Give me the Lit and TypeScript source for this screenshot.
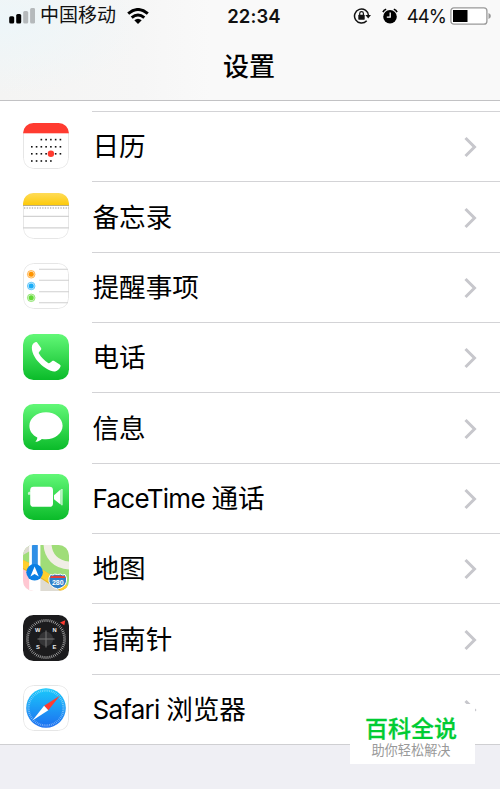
import { LitElement, html, css, svg } from "lit";
import { customElement, property } from "lit/decorators.js";

const range = (n: number) => Array.from({ length: n }, (_, i) => i);

const ticks = (cx: number, cy: number, inner: number, outer: number, count: number) =>
  range(count)
    .map((i) => {
      const a = (i / count) * Math.PI * 2;
      const p = (r: number) => `${(cx + Math.cos(a) * r).toFixed(2)} ${(cy + Math.sin(a) * r).toFixed(2)}`;
      return `M${p(inner)}L${p(outer)}`;
    })
    .join("");

const calendarDots = [
  { y: 16.6, from: 2, to: 7 },
  { y: 23.8, from: 0, to: 7 },
  { y: 30.8, from: 0, to: 7 },
  { y: 38, from: 0, to: 5 },
].map((row) => ({ y: row.y, xs: range(row.to - row.from).map((i) => 8.8 + (row.from + i) * 4.77) }));

const whiteBase = svg`
  <rect width="46" height="46" fill="#fff"/>`;

const outline = svg`
  <rect x="0.5" y="0.5" width="45" height="45" rx="10" fill="none" stroke="#e6e6e6"/>`;

const green = svg`
  <defs>
    <linearGradient id="g" x1="0" y1="0" x2="0" y2="1">
      <stop offset="0" stop-color="#62f877"/>
      <stop offset="1" stop-color="#0abb29"/>
    </linearGradient>
  </defs>
  <rect width="46" height="46" fill="url(#g)"/>`;

const icons: Record<string, unknown> = {
  calendar: svg`
    ${whiteBase}${outline}
    <rect width="46" height="10.3" fill="#ff3b30"/>
    ${calendarDots.map((row) =>
      row.xs.map((x) => svg`<rect x=${x - 0.8} y=${row.y - 0.8} width="1.6" height="1.6" fill="#111"/>`)
    )}
    <circle cx="27.9" cy="30.8" r="3.2" fill="#ff3b30"/>`,
  notes: svg`
    <defs>
      <linearGradient id="n" x1="0" y1="0" x2="0" y2="1">
        <stop offset="0" stop-color="#ffdc58"/>
        <stop offset="1" stop-color="#fdca08"/>
      </linearGradient>
    </defs>
    ${whiteBase}${outline}
    <rect width="46" height="12.3" fill="url(#n)"/>
    <path d="M0 12.5H46" stroke="#b9ad83"/>
    <path d="M1 15H46" stroke="#bbb" stroke-width="1.6" stroke-dasharray="1.3 1.3"/>
    <path d="M0 23.3H46M0 34.8H46" stroke="#d2d2d2" stroke-width="1.2"/>`,
  reminders: svg`
    ${whiteBase}${outline}
    <path d="M16 6.2H45M16 17.3H46M16 28.8H46M16 39.7H45" stroke="#d0d0d0" stroke-width="1.1"/>
    ${[
      { y: 11.3, c: "#ff9500" },
      { y: 23, c: "#1badf8" },
      { y: 34.8, c: "#63da38" },
    ].map(
      (d) => svg`
        <circle cx="8.2" cy=${d.y} r="3.8" fill=${d.c} fill-opacity="0.25" stroke=${d.c} stroke-opacity="0.65" stroke-width="0.9"/>
        <circle cx="8.2" cy=${d.y} r="2.5" fill=${d.c}/>`
    )}`,
  phone: svg`
    ${green}
    <path d="M9.2 11.2c.9-1.5 2.3-2.8 3.6-3.1.8-.2 1.2.1 1.7.8l3.4 4.800c.5.8.5 1.5-.1 2.200l-1.700 2c-.5.6-.4 1.200 0 1.900 2.200 3.700 5.300 6.900 9 9.100.7.4 1.300.4 1.900-.1l2-1.600c.7-.6 1.400-.6 2.200-.1l5.500 3.500c.8.5 1 1.100.8 1.900-.6 2-2.800 4.600-5.400 4.900-4.300.5-10.600-3.300-15.400-8.100C11.600 24.200 7.600 16.600 9.200 11.200z" fill="#fff"/>`,
  messages: svg`
    ${green}
    <path d="M23 8.2c9.2 0 16.6 6 16.6 13.6S32.2 35.300 23 35.300c-1.500 0-2.900-.1-4.200-.4-1.400 1.400-3.500 2.500-5.800 2.900-.5.1-.6-.3-.3-.6 1-.9 1.600-2.200 1.600-3.700C9.500 31.200 6.400 27 6.400 21.800 6.400 14.200 13.800 8.200 23 8.200z" fill="#fff"/>`,
  facetime: svg`
    ${green}
    <rect x="7.2" y="12.8" width="22.8" height="20" rx="3.4" fill="#fff"/>
    <path d="M5 19.2q0-1.4 1.4-1.4h1.200v3H5z" fill="#fff" opacity=".7"/>
    <path d="M31 21.2l6.600-5.600v15L31 25.200z" fill="#fff"/>
    <path d="M38.900 15v16.200" stroke="#fff" stroke-width="1.3" opacity=".85"/>`,
  maps: svg`
    <rect width="46" height="46" fill="#efece7"/>
    <path d="M17 0H46V46L17 24z" fill="#9fdd78"/>
    <path d="M0 20l17 9v17H0z" fill="#ffc7d2"/>
    <path d="M17 26l20 20H17z" fill="#dedbd3"/>
    <path d="M0 0H7V20L0 16z" fill="#9fdd78"/>
    <path d="M0 0H7V6L0 10z" fill="#dedbd3"/>
    <path d="M24.5-2C24.500 11 33 20.500 48 20.500" fill="none" stroke="#f1eee6" stroke-width="8"/>
    <path d="M-2 18.500L17 28L48 48" fill="none" stroke="#e9b52a" stroke-width="8.4"/>
    <path d="M-2 18L17 27.400L48 47" fill="none" stroke="#ffcf2e" stroke-width="7.2"/>
    <rect x="6.2" width="11.2" height="46" fill="#fff"/>
    <rect x="8.9" width="5.9" height="28" fill="#2f8fe6"/>
    <circle cx="11.6" cy="27.3" r="8.3" fill="#0a7fe4"/>
    <path d="M11.6 21.6l4.2 10-4.200-2.500-4.200 2.500z" fill="#fff"/>
    <path d="M27.5 29.5q2.500 1.200 4.200-.4 3 .9 6 0 1.800 1.600 4.300.4 2.400 3.300 1.400 7.300-1.300 5.400-8.700 7.200-7.400-1.800-8.700-7.200-1-4 1.500-7.300z" fill="#2e80c9" stroke="#fff" stroke-width="1"/>
    <path d="M28 30.800q2.500.8 4-.4 2.700.8 5.500 0 1.500 1.200 4 .4l1 2.200H27z" fill="#e0403a"/>
    <text x="34.800" y="39.700" font-size="7" font-weight="700" text-anchor="middle" fill="#fff">280</text>`,
  compass: svg`
    <rect width="46" height="46" fill="#1b1b1d"/>
    <path d=${ticks(23, 24, 17.2, 20, 60)} stroke="#d2d2d2" stroke-width=".7"/>
    <circle cx="23" cy="24" r="7.2" fill="#343436"/>
    <path d="M23 15.500V32.500M14.500 24H31.500" stroke="#777" stroke-width="1"/>
    <path d="M37 7.500l5.300-2.200-1 5z" fill="#ff3b30"/>
    <g font-size="5.800" font-weight="700" fill="#eee" text-anchor="middle">
      <text x="14.700" y="17.200">W</text>
      <text x="31.600" y="17.200">N</text>
      <text x="14.900" y="34">S</text>
      <text x="31.500" y="34">E</text>
    </g>`,
  safari: svg`
    <defs>
      <linearGradient id="s" x1="0" y1="0" x2="0" y2="1">
        <stop offset="0" stop-color="#1bc9fb"/>
        <stop offset="1" stop-color="#1d6ff0"/>
      </linearGradient>
    </defs>
    ${whiteBase}${outline}
    <circle cx="23" cy="23" r="19.800" fill="url(#s)"/>
    <path d=${ticks(23, 23, 16.4, 18.7, 60)} stroke="#fff" stroke-width=".5" opacity=".75"/>
    <path d="M36.800 10.800L25.300 25.300 21.100 20.700z" fill="#ff3b30"/>
    <path d="M9.500 35.500L21.100 20.700 25.300 25.300z" fill="#fff"/>`,
};

@customElement("app-icon")
export class AppIcon extends LitElement {
  static styles = css`
    :host {
      display: block;
      width: 46px;
      height: 46px;
      border-radius: 10.5px;
      overflow: hidden;
    }
    svg {
      display: block;
      font-family: "Liberation Sans", sans-serif;
    }
  `;

  @property() name = "";

  render() {
    return html`<svg width="46" height="46" viewBox="0 0 46 46">${icons[this.name]}</svg>`;
  }
}

@customElement("settings-row")
export class SettingsRow extends LitElement {
  static styles = css`
    :host {
      display: flex;
      height: 70.35px;
      padding-left: 23px;
      box-sizing: border-box;
    }
    app-icon {
      margin-top: 11.5px;
      flex: none;
    }
    .content {
      flex: 1;
      display: flex;
      align-items: center;
      justify-content: space-between;
      margin-left: 23px;
      padding-right: 23px;
      border-top: 1px solid #d3d3d6;
    }
    .label {
      font-size: 26.6px;
      line-height: 40px;
      padding-left: 0.5px;
      color: #000;
      white-space: nowrap;
    }
    .latin {
      font-size: 26px;
      letter-spacing: -0.75px;
    }
    .chevron {
      margin-top: 1px;
    }
  `;

  @property() icon = "";
  @property() label = "";

  render() {
    const latin = this.label.match(/^[A-Za-z ]*/)![0];
    return html`
      <app-icon name=${this.icon}></app-icon>
      <div class="content">
        <span class="label"><span class="latin">${latin}</span>${this.label.slice(latin.length)}</span>
        <svg class="chevron" width="14" height="22" viewBox="0 0 14 22">
          <path d="M2.5 2L11.5 11L2.5 20" fill="none" stroke="#c7c7cc" stroke-width="3"/>
        </svg>
      </div>
    `;
  }
}

@customElement("status-bar")
export class StatusBar extends LitElement {
  static styles = css`
    :host {
      display: grid;
      grid-template-columns: 1fr auto 1fr;
      align-items: center;
      height: 32px;
      padding: 0 9px;
      font-size: 19px;
      color: #111;
    }
    svg {
      display: block;
      flex: none;
    }
    .left,
    .right {
      display: flex;
      align-items: center;
    }
    .right {
      justify-content: flex-end;
    }
    .carrier {
      margin: 0 11px 0 5px;
      line-height: 32px;
    }
    .time {
      font-weight: 600;
      font-size: 18.5px;
      letter-spacing: 0.1px;
      padding-left: 8px;
    }
    .alarm {
      margin: 0 9px 0 11px;
    }
    .percent {
      font-size: 18.5px;
      letter-spacing: -0.9px;
      margin-right: 4px;
    }
  `;

  render() {
    return html`
      <div class="left">
        <svg width="26" height="16" viewBox="0 0 26 16">
          <rect x="0.2" y="8.3" width="5" height="7.2" rx="1.5" fill="#000"/>
          <rect x="7.2" y="6" width="5" height="9.5" rx="1.5" fill="#000"/>
          <rect x="14.2" y="3" width="5" height="12.5" rx="1.5" fill="#b5b9bb"/>
          <rect x="21.1" y="0" width="5" height="15.5" rx="1.5" fill="#b5b9bb"/>
        </svg>
        <span class="carrier">中国移动</span>
        <svg width="22" height="16" viewBox="0 0 22 16">
          <g fill="none" stroke="#000" stroke-width="3">
            <path d="M1.2 5.7Q11-2.7 20.8 5.7"/>
            <path d="M4.7 9.6Q11 4.3 17.3 9.6"/>
          </g>
          <path d="M7.3 12.3Q11 9.3 14.7 12.3L11 16z" fill="#000"/>
        </svg>
      </div>
      <div class="time">22:34</div>
      <div class="right">
        <svg width="18" height="18" viewBox="0 0 18 18">
          <path d="M13.7 13.7A7 7 0 1 1 15.5 8.5" fill="none" stroke="#111" stroke-width="1.5"/>
          <path d="M12.4 8h5.6l-2.8 3.5z" fill="#111"/>
          <rect x="5.3" y="7.8" width="6.4" height="4.9" rx=".6" fill="#111"/>
          <path d="M6.7 8V6.5a1.85 1.85 0 0 1 3.7 0V8" fill="none" stroke="#111" stroke-width="1.2"/>
        </svg>
        <svg class="alarm" width="16" height="16" viewBox="0 0 16 16">
          <circle cx="8" cy="8.7" r="6.8" fill="#000"/>
          <path d="M1 4.1Q1.8 2 4.2 1.3M15 4.1Q14.2 2 11.8 1.3" fill="none" stroke="#000" stroke-width="1.7"/>
          <path d="M8.2 4.5V9.2H4.8" fill="none" stroke="#fff" stroke-width="1.3"/>
        </svg>
        <span class="percent">44%</span>
        <svg width="41" height="18" viewBox="0 0 41 18">
          <rect x="0.9" y="0.8" width="36" height="16.4" rx="3" fill="#fff" stroke="#999" stroke-width="1.3"/>
          <rect x="3" y="3" width="14.5" height="12" fill="#000"/>
          <path d="M38.5 6q2.4 1 2.4 3T38.500 12z" fill="#999"/>
        </svg>
      </div>
    `;
  }
}

@customElement("app-root")
export class AppRoot extends LitElement {
  static styles = css`
    :host {
      display: block;
      position: relative;
      height: 789px;
      overflow: hidden;
      background: #efeff4;
      font-family: Inter, "Noto Sans CJK SC", sans-serif;
    }
    .header {
      height: 100px;
      border-bottom: 1px solid #c2c2c4;
      background:
        radial-gradient(ellipse 150px 75px at 0 20px, #edf6f9, rgba(244, 247, 248, 0)),
        linear-gradient(90deg, #f4f4f3, #f6f6f6 28%, #f9f9f9 42%);
    }
    .title {
      margin: 0;
      height: 68px;
      line-height: 69px;
      padding-right: 2px;
      font-size: 26px;
      font-weight: 500;
      text-align: center;
      color: #000;
    }
    .list {
      background: #fff;
      padding-top: 10px;
      border-bottom: 1px solid #cfcfd2;
    }
    .watermark {
      position: absolute;
      left: 350px;
      top: 704px;
      width: 125px;
      height: 60px;
      box-sizing: border-box;
      padding-top: 10px;
      background: #fff;
      text-align: center;
    }
    .brand {
      font-size: 23px;
      line-height: 30px;
      font-weight: 500;
      color: #0c3;
      padding-right: 3px;
      -webkit-text-stroke: 0.3px #0c3;
    }
    .slogan {
      font-size: 13.2px;
      line-height: 12px;
      color: #999;
      padding-right: 3px;
    }
  `;

  items = [
    { icon: "calendar", label: "日历" },
    { icon: "notes", label: "备忘录" },
    { icon: "reminders", label: "提醒事项" },
    { icon: "phone", label: "电话" },
    { icon: "messages", label: "信息" },
    { icon: "facetime", label: "FaceTime 通话" },
    { icon: "maps", label: "地图" },
    { icon: "compass", label: "指南针" },
    { icon: "safari", label: "Safari 浏览器" },
  ];

  render() {
    return html`
      <div class="header">
        <status-bar></status-bar>
        <h1 class="title">设置</h1>
      </div>
      <div class="list">
        ${this.items.map((item) => html`<settings-row icon=${item.icon} label=${item.label}></settings-row>`)}
      </div>
      <div class="watermark">
        <div class="brand">百科全说</div>
        <div class="slogan">助你轻松解决</div>
      </div>
    `;
  }
}
